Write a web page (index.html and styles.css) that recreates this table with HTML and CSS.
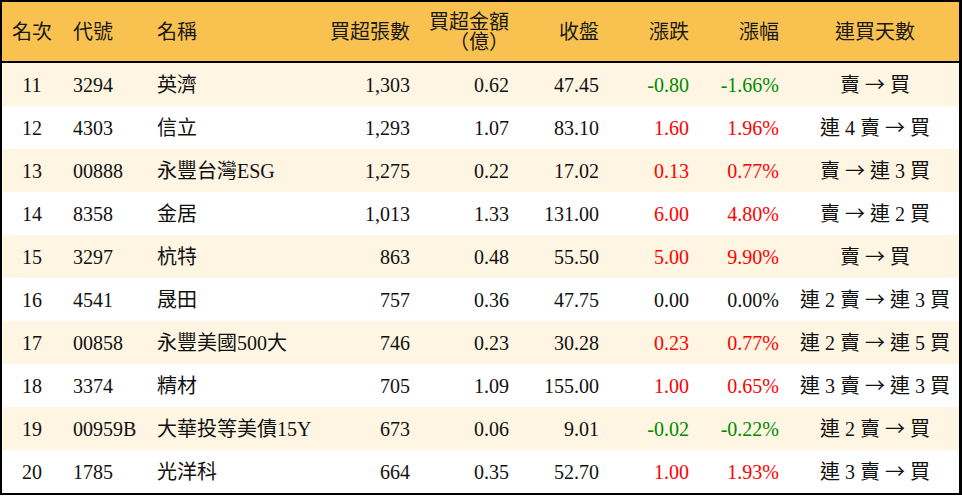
FILE: index.html
```html
<!DOCTYPE html>
<html lang="zh-Hant">
<head>
<meta charset="utf-8">
<title>買超排行</title>
<link rel="stylesheet" href="styles.css">
</head>
<body>
<div class="table">
  <div class="row head">
    <div class="c c1">名次</div>
    <div class="c c2">代號</div>
    <div class="c c3">名稱</div>
    <div class="c c4">買超張數</div>
    <div class="c c5 two">買超金額<br>（億）</div>
    <div class="c c6">收盤</div>
    <div class="c c7">漲跌</div>
    <div class="c c8">漲幅</div>
    <div class="c c9">連買天數</div>
  </div>
  <div class="row alt">
    <div class="c c1">11</div><div class="c c2">3294</div><div class="c c3">英濟</div>
    <div class="c c4">1,303</div><div class="c c5">0.62</div><div class="c c6">47.45</div>
    <div class="c c7 dn">-0.80</div><div class="c c8 dn">-1.66%</div><div class="c c9">賣 <span class="arr">→</span> 買</div>
  </div>
  <div class="row">
    <div class="c c1">12</div><div class="c c2">4303</div><div class="c c3">信立</div>
    <div class="c c4">1,293</div><div class="c c5">1.07</div><div class="c c6">83.10</div>
    <div class="c c7 up">1.60</div><div class="c c8 up">1.96%</div><div class="c c9">連 4 賣 <span class="arr">→</span> 買</div>
  </div>
  <div class="row alt">
    <div class="c c1">13</div><div class="c c2">00888</div><div class="c c3">永豐台灣ESG</div>
    <div class="c c4">1,275</div><div class="c c5">0.22</div><div class="c c6">17.02</div>
    <div class="c c7 up">0.13</div><div class="c c8 up">0.77%</div><div class="c c9">賣 <span class="arr">→</span> 連 3 買</div>
  </div>
  <div class="row">
    <div class="c c1">14</div><div class="c c2">8358</div><div class="c c3">金居</div>
    <div class="c c4">1,013</div><div class="c c5">1.33</div><div class="c c6">131.00</div>
    <div class="c c7 up">6.00</div><div class="c c8 up">4.80%</div><div class="c c9">賣 <span class="arr">→</span> 連 2 買</div>
  </div>
  <div class="row alt">
    <div class="c c1">15</div><div class="c c2">3297</div><div class="c c3">杭特</div>
    <div class="c c4">863</div><div class="c c5">0.48</div><div class="c c6">55.50</div>
    <div class="c c7 up">5.00</div><div class="c c8 up">9.90%</div><div class="c c9">賣 <span class="arr">→</span> 買</div>
  </div>
  <div class="row">
    <div class="c c1">16</div><div class="c c2">4541</div><div class="c c3">晟田</div>
    <div class="c c4">757</div><div class="c c5">0.36</div><div class="c c6">47.75</div>
    <div class="c c7">0.00</div><div class="c c8">0.00%</div><div class="c c9">連 2 賣 <span class="arr">→</span> 連 3 買</div>
  </div>
  <div class="row alt">
    <div class="c c1">17</div><div class="c c2">00858</div><div class="c c3">永豐美國500大</div>
    <div class="c c4">746</div><div class="c c5">0.23</div><div class="c c6">30.28</div>
    <div class="c c7 up">0.23</div><div class="c c8 up">0.77%</div><div class="c c9">連 2 賣 <span class="arr">→</span> 連 5 買</div>
  </div>
  <div class="row">
    <div class="c c1">18</div><div class="c c2">3374</div><div class="c c3">精材</div>
    <div class="c c4">705</div><div class="c c5">1.09</div><div class="c c6">155.00</div>
    <div class="c c7 up">1.00</div><div class="c c8 up">0.65%</div><div class="c c9">連 3 賣 <span class="arr">→</span> 連 3 買</div>
  </div>
  <div class="row alt">
    <div class="c c1">19</div><div class="c c2">00959B</div><div class="c c3">大華投等美債15Y</div>
    <div class="c c4">673</div><div class="c c5">0.06</div><div class="c c6">9.01</div>
    <div class="c c7 dn">-0.02</div><div class="c c8 dn">-0.22%</div><div class="c c9">連 2 賣 <span class="arr">→</span> 買</div>
  </div>
  <div class="row">
    <div class="c c1">20</div><div class="c c2">1785</div><div class="c c3">光洋科</div>
    <div class="c c4">664</div><div class="c c5">0.35</div><div class="c c6">52.70</div>
    <div class="c c7 up">1.00</div><div class="c c8 up">1.93%</div><div class="c c9">連 3 賣 <span class="arr">→</span> 買</div>
  </div>
</div>
</body>
</html>
```
FILE: styles.css
```css
html, body {
  margin: 0;
  padding: 0;
  background: #ffffff;
}
.table {
  width: 962px;
  box-sizing: border-box;
  border: 2px solid #000;
  border-right-width: 3px;
  font-family: "Liberation Serif", "Noto Sans CJK TC", serif;
  font-size: 20px;
  color: #111;
}
.row {
  display: grid;
  grid-template-columns: 60px 83px 185px 90px 99px 90px 90px 90px 1fr;
  height: 43px;
  align-items: center;
  background: #ffffff;
}
.row.alt {
  background: #fef5e2;
}
.row.head {
  height: 59px;
  background: #f9c250;
  border-bottom: 2px solid #000;
  color: #1a1a1a;
}
.c {
  white-space: nowrap;
  line-height: 20px;
}
.c1 { text-align: center; }
.c2 { padding-left: 11px; }
.c3 { padding-left: 12px; }
.c4, .c5, .c6, .c7, .c8 { text-align: right; padding-right: 10px; }
.c9 { text-align: center; padding-left: 2px; }
.two { line-height: 20px; }
.arr {
  font-family: "Noto Sans CJK TC", "DejaVu Sans", sans-serif;
  font-size: 20px;
}
.up { color: #ff0000; }
.dn { color: #008a00; }
```
